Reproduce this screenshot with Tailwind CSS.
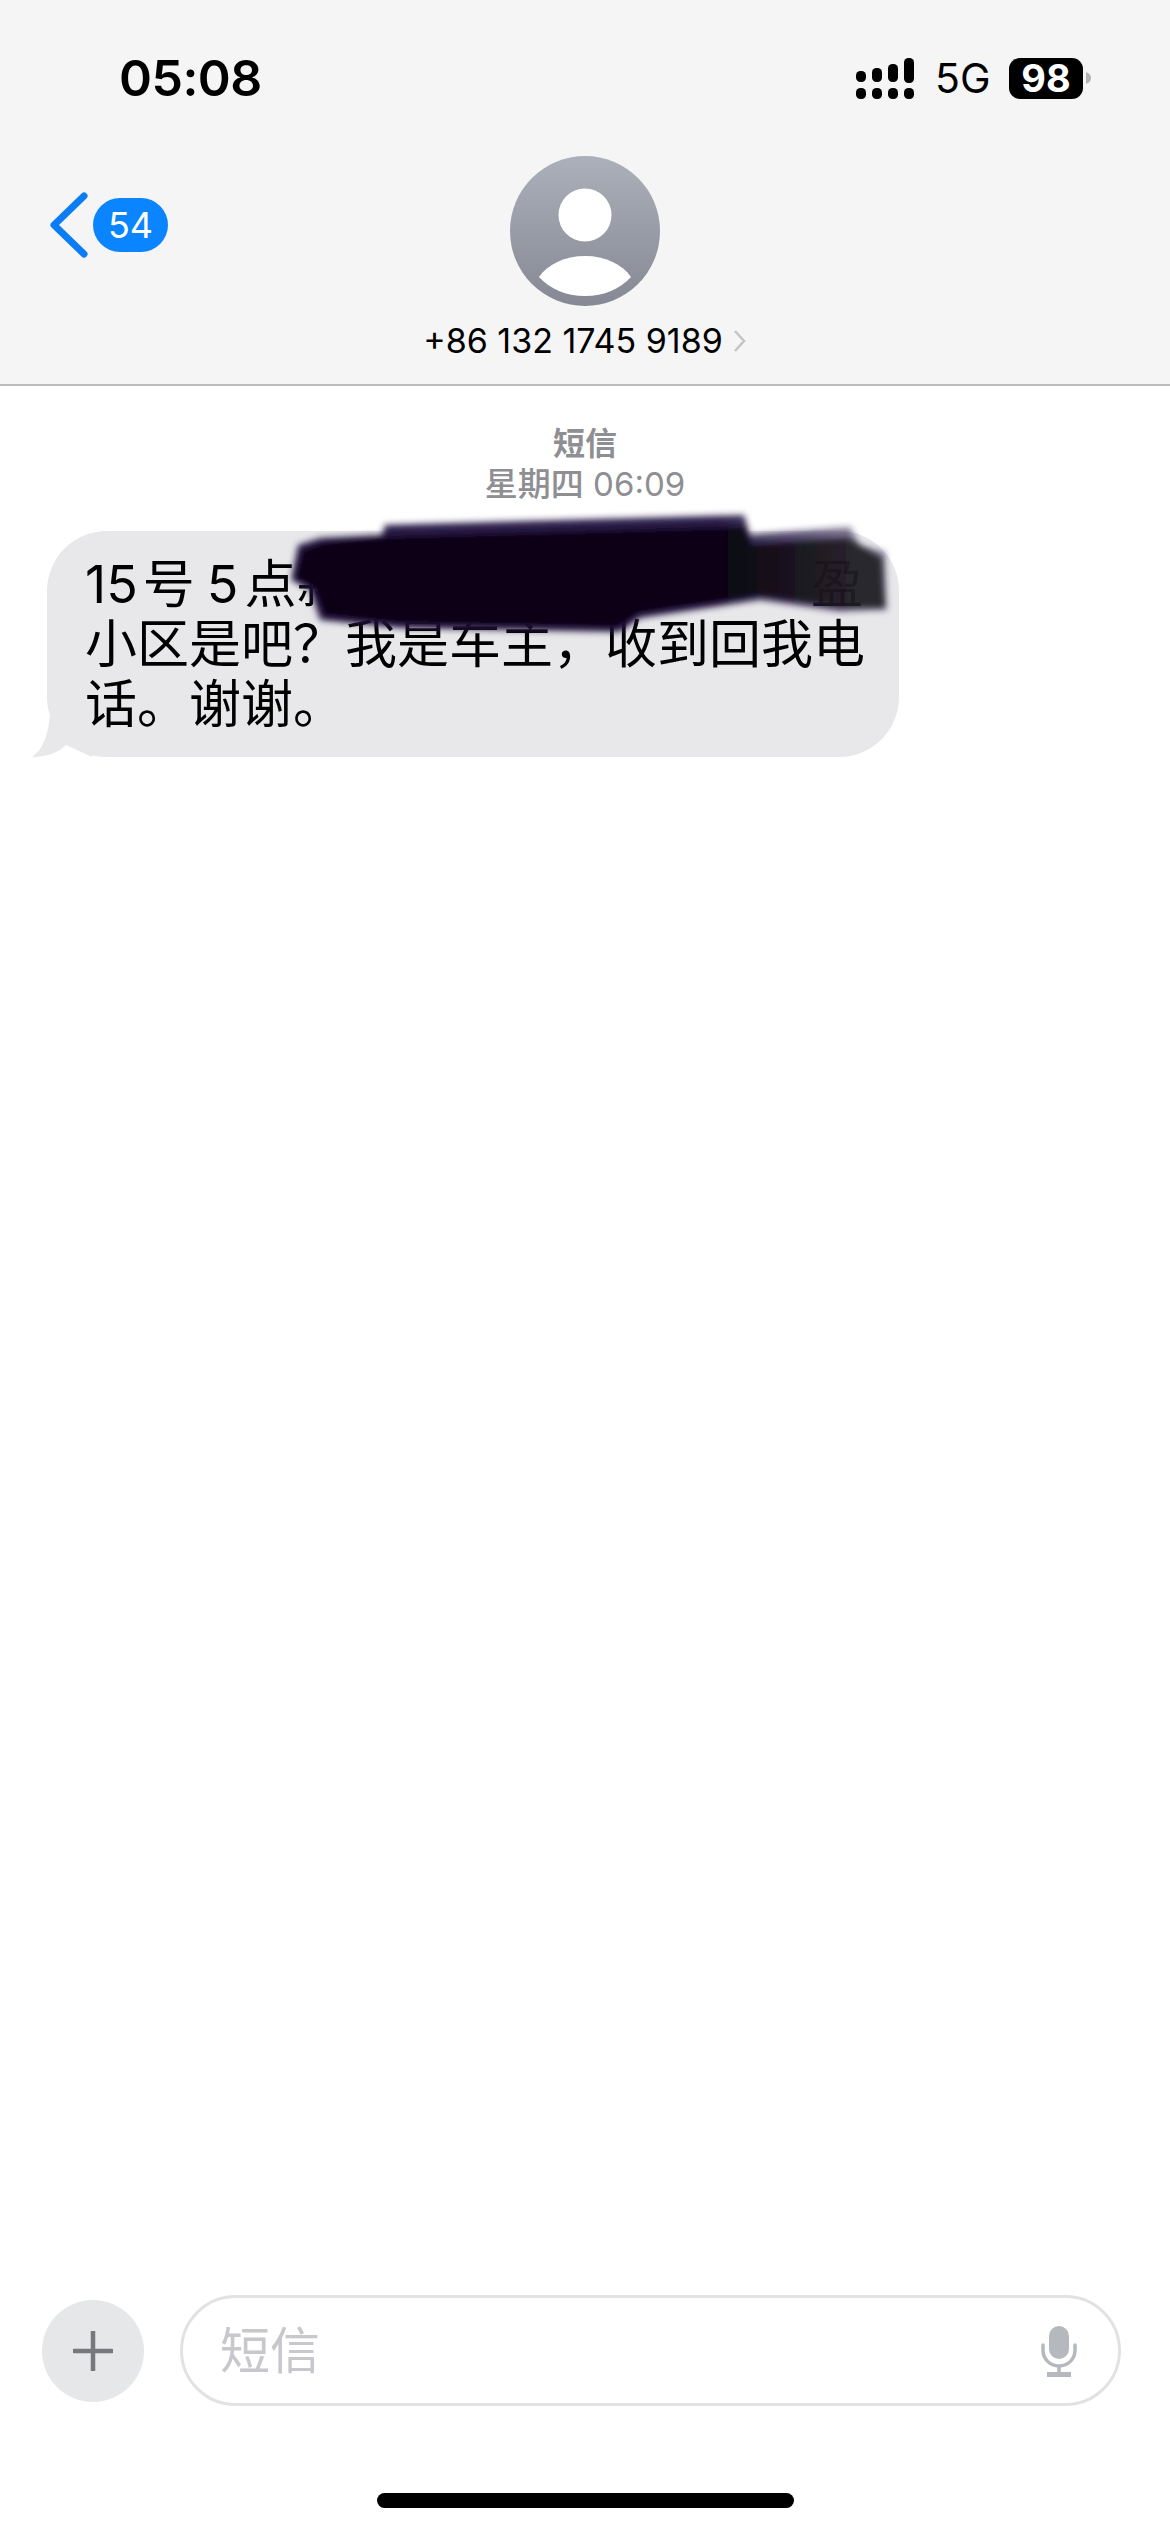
<!DOCTYPE html>
<html lang="zh-CN">
<head>
  <meta charset="UTF-8" />
  <meta name="viewport" content="width=device-width, initial-scale=1.0" />
  <title>短信</title>
  <script src="https://cdn.jsdelivr.net/npm/@tailwindcss/browser@4"></script>
</head>
<body class="bg-white">
  <div class="w-[1170px] h-[2532px] flex flex-col overflow-hidden font-['Inter','Noto_Sans_CJK_SC',sans-serif] text-black">

    <!-- header -->
    <header class="h-[386px] shrink-0 bg-[#f5f5f5] border-b-2 border-[#bcbcbe]">
      <div class="h-[156px] pt-[50px]">
        <div class="h-[56px] flex items-center justify-between pl-[119px] pr-[79px]">
          <span class="text-[50px] leading-none font-semibold tracking-[-0.5px]">05:08</span>
          <div class="flex items-center">
            <svg class="w-[58px] h-[41px]" viewBox="0 0 58 41">
              <rect x="0" y="13" width="10" height="11" rx="4.5" />
              <rect x="16" y="10" width="10" height="14" rx="4.5" />
              <rect x="32" y="6" width="10" height="18" rx="4.5" />
              <rect x="48" y="0" width="10" height="25" rx="4.5" />
              <rect x="0" y="30" width="10" height="11" rx="4.5" />
              <rect x="16" y="30" width="10" height="11" rx="4.5" />
              <rect x="32" y="30" width="10" height="11" rx="4.5" />
              <rect x="48" y="30" width="10" height="11" rx="4.5" />
            </svg>
            <span class="ml-[21px] w-[54px] text-[41px] leading-none font-normal">5G</span>
            <span class="ml-[20px] w-[74px] h-[41px] rounded-[11px] bg-black text-white text-[38px] leading-[41px] font-bold text-center">98</span>
            <svg class="ml-[3px] w-[5px] h-[12px]" viewBox="0 0 5 12"><path d="M0 0 C3 1 5 3 5 6 C5 9 3 11 0 12Z" fill="#b4b4b6" /></svg>
          </div>
        </div>
      </div>

      <div class="grid grid-cols-[1fr_auto_1fr]">
        <div class="flex items-center h-[138px] pl-[50px] gap-[5px]">
          <svg class="w-[38px] h-[66px]" viewBox="0 0 38 66" fill="none">
            <path d="M34 4 L4 33 L34 62" stroke="#0a7cf5" stroke-width="7" stroke-linecap="round" stroke-linejoin="round" />
          </svg>
          <span class="w-[75px] h-[54px] rounded-full bg-[#0a84ff] text-white text-[36px] leading-[54px] text-center">54</span>
        </div>
        <div class="flex flex-col items-center">
          <svg class="w-[150px] h-[150px]" viewBox="0 0 150 150">
            <defs>
              <linearGradient id="avatarFill" x1="0" y1="0" x2="0" y2="1">
                <stop offset="0" stop-color="#acb0bb" />
                <stop offset="1" stop-color="#868993" />
              </linearGradient>
            </defs>
            <circle cx="75" cy="75" r="75" fill="url(#avatarFill)" />
            <circle cx="75" cy="59" r="26.5" fill="#fff" />
            <path d="M29 121 C38 108 55 100 75 100 C95 100 112 108 121 121 C110 133 94 140 75 140 C56 140 40 133 29 121Z" fill="#fff" />
          </svg>
          <div class="mt-[16px] flex items-center">
            <span class="text-[34px] leading-[38px] whitespace-nowrap">+86 132 1745 9189</span>
            <svg class="ml-[10px] w-[14px] h-[24px]" viewBox="0 0 14 24" fill="none">
              <path d="M2 2 L11 12 L2 22" stroke="#c4c4c6" stroke-width="2.5" />
            </svg>
          </div>
        </div>
        <div></div>
      </div>
    </header>

    <!-- conversation -->
    <main class="flex-1 flex flex-col">
      <div class="pt-[38px] text-center text-[#8e8e93] leading-[40px]">
        <div class="text-[32px] font-semibold">短信</div>
        <div class="text-[33px]"><span class="font-medium">星期四</span> 06:09</div>
      </div>

      <div class="relative ml-[47px] mt-[27px] w-[852px] h-[226px] rounded-[60px] bg-[#e8e8ea] pl-[38px] pr-[36px] pt-[24px] text-[52px] leading-[60px]">
        <svg class="absolute left-[-15px] bottom-0 w-[60px] h-[50px]" viewBox="0 0 60 50">
          <path d="M18 0 C18 24 12 42 0 50 C14 50 26 46 34 38 L60 50 L60 0Z" fill="#e8e8ea" />
        </svg>
        <div class="relative flex justify-between whitespace-nowrap">
          <span class="flex">
            <span>15</span>
            <span class="ml-[5px]">号</span>
            <span class="ml-[12px]">5</span>
            <span class="ml-[6px]">点</span>
            <span>新</span>
          </span>
          <span>盈</span>
        </div>
        <div class="relative whitespace-nowrap">小区是吧&#xFF1F;我是车主&#xFF0C;收到回我电</div>
        <div class="relative whitespace-nowrap">话。谢谢。</div>

        <!-- scribble over the redacted part of the message -->
        <svg class="absolute left-[223px] top-[-31px] w-[640px] h-[150px]" viewBox="0 0 640 150">
          <defs>
            <filter id="inkBlur" x="-5%" y="-10%" width="110%" height="120%"><feGaussianBlur stdDeviation="3" /></filter>
            <linearGradient id="inkEdge" x1="0" y1="0" x2="1" y2="0">
              <stop offset="0.72" stop-color="#2a1d4a" />
              <stop offset="0.95" stop-color="#2a1d4a" stop-opacity="0.55" />
            </linearGradient>
            <linearGradient id="inkBody" x1="0" y1="0" x2="1" y2="0">
              <stop offset="0.72" stop-color="#0c0512" />
              <stop offset="0.95" stop-color="#1d1b1f" stop-opacity="0.88" />
            </linearGradient>
          </defs>
          <g filter="url(#inkBlur)">
            <path d="M115 25 L474 15 L480 35 L580 27 L590 45 L615 52 L617 110 L570 112 L490 100 L370 118 L350 132 L130 128 L50 120 L40 90 L21 80 L28 45 L50 38 L112 35Z" fill="url(#inkEdge)" />
            <path d="M118 36 L474 26 L482 44 L578 38 L612 58 L615 108 L570 108 L490 96 L368 114 L348 128 L130 124 L54 116 L44 88 L25 78 L32 50 L54 42Z" fill="url(#inkBody)" />
          </g>
        </svg>
      </div>
    </main>

    <!-- composer -->
    <div class="shrink-0 flex items-center pl-[42px] pr-[49px]">
      <button type="button" class="w-[102px] h-[102px] rounded-full bg-[#e5e7e8] flex items-center justify-center">
        <svg class="w-[40px] h-[40px]" viewBox="0 0 40 40"><path d="M20 1 V39 M1 20 H39" stroke="#77787b" stroke-width="4.5" stroke-linecap="round" /></svg>
      </button>
      <div class="ml-[36px] flex-1 h-[111px] rounded-full border-[3px] border-[#e2e2e4] flex items-center justify-between pl-[37px] pr-[41px]">
        <span class="text-[50px] leading-none text-[#c7c7cc]">短信</span>
        <svg class="w-[36px] h-[52px]" viewBox="0 0 36 52" fill="none">
          <rect x="8" y="1" width="20" height="33" rx="10" fill="#b5b8bd" />
          <path d="M2 20 V25 C2 34 9 41 18 41 C27 41 34 34 34 25 V20" stroke="#b5b8bd" stroke-width="3.5" stroke-linecap="round" />
          <path d="M18 41 V48" stroke="#b5b8bd" stroke-width="3.5" />
          <rect x="6" y="47" width="24" height="5" fill="#b5b8bd" />
        </svg>
      </div>
    </div>

    <!-- home indicator -->
    <div class="shrink-0 h-[126px] pt-[87px] flex justify-center">
      <div class="w-[417px] h-[15px] rounded-full bg-black"></div>
    </div>
  </div>
</body>
</html>
